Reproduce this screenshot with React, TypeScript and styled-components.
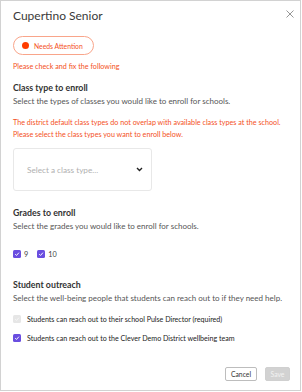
import styled, { createGlobalStyle } from "styled-components";

const GlobalStyle = createGlobalStyle`
  html, body {
    margin: 0;
    padding: 0;
    background: #ffffff;
  }
  * {
    box-sizing: border-box;
  }
`;

const Modal = styled.div`
  width: 301px;
  height: 391px;
  border: 1px solid #d2d2d2;
  background: #fff;
  font-family: Lato, "Open Sans", sans-serif;
  color: #333;
  display: flex;
  flex-direction: column;
  padding: 7px 6px 0 12px;
  white-space: nowrap;
`;

const Header = styled.div`
  display: flex;
  align-items: flex-start;
  justify-content: space-between;
`;

const Title = styled.h1`
  margin: 0;
  font-size: 12px;
  font-weight: 400;
  color: #3a3a3a;
  line-height: 16px;
`;

const CloseBtn = styled.button`
  border: none;
  background: none;
  padding: 0;
  margin: 2px 0 0 0;
  width: 8px;
  height: 8px;
  display: flex;
  cursor: pointer;
`;

const StatusPill = styled.div`
  align-self: flex-start;
  margin-top: 12px;
  width: 81px;
  height: 19px;
  display: flex;
  align-items: center;
  gap: 5px;
  padding: 0 0 0 8px;
  border: 1px solid #f9a58a;
  border-radius: 999px;
  font-size: 6.8px;
  color: #f4511e;
`;

const Dot = styled.span`
  width: 7px;
  height: 7px;
  border-radius: 50%;
  background: #ff3d00;
`;

const Alert = styled.p<{ $top: number }>`
  margin: ${(p) => p.$top}px 0 0;
  font-size: 7.2px;
  line-height: ${(p) => (p.$top > 8 ? 12 : 10)}px;
  color: #f4511e;
`;

const SectionTitle = styled.h2<{ $top: number }>`
  margin: ${(p) => p.$top}px 0 0;
  font-size: 8.8px;
  font-weight: 700;
  color: #333;
  line-height: 12px;
`;

const Help = styled.p`
  margin: 2px 0 0;
  font-size: 8px;
  line-height: 10px;
  color: #555;
`;

const SelectBox = styled.div`
  margin-top: 7px;
  width: 139px;
  height: 43px;
  border: 1px solid #e8e8e8;
  border-radius: 3px;
  display: flex;
  align-items: center;
  justify-content: space-between;
  padding: 0 8px 0 13px;
  font-size: 8.2px;
  color: #b0b0b0;
`;

const GradeRow = styled.div`
  margin-top: 18px;
  height: 10px;
  display: flex;
  align-items: center;
  gap: 9px;
`;

const CheckItem = styled.label`
  display: flex;
  align-items: center;
  gap: 3px;
  font-size: 7.3px;
  color: #444;
`;

const Box = styled.span<{ $disabled?: boolean }>`
  width: 8px;
  height: 8px;
  border-radius: 1.5px;
  background: ${(p) => (p.$disabled ? "#e6e6e6" : "#6a4ee0")};
  display: flex;
  align-items: center;
  justify-content: center;
`;

const OutreachList = styled.div`
  margin-top: 11px;
  display: flex;
  flex-direction: column;
  gap: 9px;
`;

const OutreachItem = styled.label`
  display: flex;
  align-items: center;
  gap: 6px;
  height: 10px;
  font-size: 7.1px;
  color: #222;
`;

const Footer = styled.div`
  margin-top: auto;
  margin-bottom: 9px;
  display: flex;
  justify-content: flex-end;
  gap: 8px;
  padding-right: 4px;
`;

const Button = styled.button<{ $disabled?: boolean }>`
  height: 14px;
  padding: 0;
  width: ${(p) => (p.$disabled ? 25 : 32)}px;
  border-radius: 2px;
  font-family: Lato, "Open Sans", sans-serif;
  font-size: 6.8px;
  border: 1px solid ${(p) => (p.$disabled ? "#d0d0d0" : "#bdbdbd")};
  background: ${(p) => (p.$disabled ? "#d2d2d2" : "#fff")};
  color: ${(p) => (p.$disabled ? "#f2f2f2" : "#333")};
`;

function Check({ disabled }: { disabled?: boolean }) {
  return (
    <Box $disabled={disabled}>
      <svg width="6" height="6" viewBox="0 0 10 10">
        <path
          d="M2 5.2 L4.2 7.4 L8.2 2.8"
          fill="none"
          stroke={disabled ? "#f7f7f7" : "#fff"}
          strokeWidth="1.6"
        />
      </svg>
    </Box>
  );
}

export default function App() {
  return (
    <>
      <GlobalStyle />
      <Modal>
        <Header>
          <Title>Cupertino Senior</Title>
          <CloseBtn aria-label="Close">
            <svg width="8" height="8" viewBox="0 0 8 8">
              <path d="M0.5 0.5 L7.5 7.5 M7.5 0.5 L0.5 7.5" stroke="#8a8a8a" strokeWidth="0.9" />
            </svg>
          </CloseBtn>
        </Header>

        <StatusPill>
          <Dot />
          Needs Attention
        </StatusPill>
        <Alert $top={7}>Please check and fix the following</Alert>

        <SectionTitle $top={10}>Class type to enroll</SectionTitle>
        <Help>Select the types of classes you would like to enroll for schools.</Help>
        <Alert $top={11}>
          The district default class types do not overlap with available class types at the school.
          <br />
          Please select the class types you want to enroll below.
        </Alert>
        <SelectBox>
          Select a class type...
          <svg width="7" height="5" viewBox="0 0 7 5">
            <path d="M1 1 L3.5 3.5 L6 1" fill="none" stroke="#222" strokeWidth="1.4" />
          </svg>
        </SelectBox>

        <SectionTitle $top={16}>Grades to enroll</SectionTitle>
        <Help>Select the grades you would like to enroll for schools.</Help>
        <GradeRow>
          <CheckItem>
            <Check />9
          </CheckItem>
          <CheckItem>
            <Check />10
          </CheckItem>
        </GradeRow>

        <SectionTitle $top={20}>Student outreach</SectionTitle>
        <Help>Select the well-being people that students can reach out to if they need help.</Help>
        <OutreachList>
          <OutreachItem>
            <Check disabled />
            Students can reach out to their school Pulse Director (required)
          </OutreachItem>
          <OutreachItem>
            <Check />
            Students can reach out to the Clever Demo District wellbeing team
          </OutreachItem>
        </OutreachList>

        <Footer>
          <Button>Cancel</Button>
          <Button $disabled>Save</Button>
        </Footer>
      </Modal>
    </>
  );
}
